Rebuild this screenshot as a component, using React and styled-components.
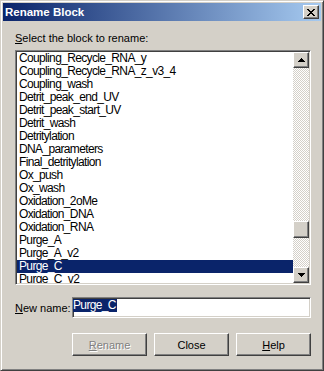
import React from "react";
import styled, { createGlobalStyle } from "styled-components";

const Global = createGlobalStyle`
  html, body { margin: 0; padding: 0; background: #d4d0c8; }
  * { box-sizing: border-box; }
`;

const FACE = "#d4d0c8";
const SEL = "#0a246a";
const UI_FONT = `"Liberation Sans", Arial, sans-serif`;

const Window = styled.div`
  width: 324px;
  height: 371px;
  background: ${FACE};
  border: 1px solid;
  border-color: ${FACE} #404040 #404040 ${FACE};
  box-shadow: inset 1px 1px #ffffff, inset -1px -1px #808080;
  padding: 2px;
  display: flex;
  flex-direction: column;
  font-family: ${UI_FONT};
  font-size: 11px;
  color: #000;
`;

const TitleBar = styled.div`
  height: 18px;
  flex: none;
  display: flex;
  align-items: center;
  justify-content: space-between;
  padding: 0 2px 0 2px;
  background: linear-gradient(to right, #0a246a, #a6caf0);
`;

const Title = styled.span`
  color: #fff;
  font-weight: bold;
  font-size: 11.5px;
  line-height: 18px;
  white-space: nowrap;
`;

const raised = `
  background: ${FACE};
  border: 1px solid;
  border-color: #ffffff #404040 #404040 #ffffff;
  box-shadow: inset -1px -1px #808080;
`;

const CloseBox = styled.div`
  ${raised}
  width: 16px;
  height: 14px;
  display: flex;
  align-items: center;
  justify-content: center;
`;

const Body = styled.div`
  flex: 1;
  display: flex;
  flex-direction: column;
  padding: 11px 10px 0 12px;
`;

const Label = styled.div`
  height: 13px;
  line-height: 13px;
  white-space: nowrap;
  margin-bottom: 5px;
`;

const sunken = `
  border: 1px solid;
  border-color: #808080 #ffffff #ffffff #808080;
  box-shadow: inset 1px 1px #404040, inset -1px -1px ${FACE};
  padding: 1px;
  background: #fff;
`;

const ListBox = styled.div`
  ${sunken}
  height: 235px;
  display: flex;
  flex: none;
`;

const Rows = styled.div`
  flex: 1;
  overflow: hidden;
  display: flex;
  flex-direction: column;
`;

const listText = `
  font-size: 12px;
  letter-spacing: -0.65px;
  line-height: 13px;
  white-space: nowrap;
`;

const Row = styled.div`
  ${listText}
  height: 13px;
  flex: none;
  padding-left: 2px;
  background: ${(p) => (p.$selected ? SEL : "transparent")};
  color: ${(p) => (p.$selected ? "#fff" : "#000")};
`;

const ScrollBar = styled.div`
  width: 16px;
  flex: none;
  display: flex;
  flex-direction: column;
`;

const ArrowBtn = styled.div`
  ${raised}
  width: 16px;
  height: 16px;
  flex: none;
  display: flex;
  align-items: center;
  justify-content: center;
`;

const Track = styled.div`
  flex: 1;
  background-color: #ffffff;
  background-image: conic-gradient(${FACE} 25%, #ffffff 0 50%, ${FACE} 0 75%, #ffffff 0);
  background-size: 2px 2px;
  padding-top: ${(p) => p.$offset}px;
`;

const Thumb = styled.div`
  ${raised}
  width: 16px;
  height: 17px;
`;

const EditRow = styled.div`
  margin-top: 12px;
  height: 21px;
  display: flex;
  align-items: center;
`;

const EditLabel = styled.label`
  width: 57px;
  flex: none;
  white-space: nowrap;
`;

const Edit = styled.div`
  ${sunken}
  ${listText}
  flex: 1;
  height: 21px;
  padding: 1px 0;
`;

const Highlight = styled.span`
  display: inline-block;
  height: 13px;
  background: ${SEL};
  color: #fff;
  padding-right: 1px;
`;

const ButtonRow = styled.div`
  margin-top: 15px;
  display: flex;
  justify-content: flex-end;
  gap: 7px;
`;

const Button = styled.div`
  ${raised}
  width: 75px;
  height: 23px;
  display: flex;
  align-items: center;
  justify-content: center;
  color: ${(p) => (p.$disabled ? "#808080" : "#000")};
  text-shadow: ${(p) => (p.$disabled ? "1px 1px #ffffff" : "none")};
  white-space: nowrap;
`;

const items = [
  "Coupling_Recycle_RNA_y",
  "Coupling_Recycle_RNA_z_v3_4",
  "Coupling_wash",
  "Detrit_peak_end_UV",
  "Detrit_peak_start_UV",
  "Detrit_wash",
  "Detritylation",
  "DNA_parameters",
  "Final_detritylation",
  "Ox_push",
  "Ox_wash",
  "Oxidation_2oMe",
  "Oxidation_DNA",
  "Oxidation_RNA",
  "Purge_A",
  "Purge_A_v2",
  "Purge_C",
  "Purge_C_v2",
];

const UpArrow = () => (
  <svg width="7" height="4" viewBox="0 0 7 4">
    <path d="M3 0h1v1h1v1h1v1h1v1H0V3h1V2h1V1h1z" fill="#000" />
  </svg>
);

const DownArrow = () => (
  <svg width="7" height="4" viewBox="0 0 7 4">
    <path d="M0 0h7v1H6v1H5v1H4v1H3V3H2V2H1V1H0z" fill="#000" />
  </svg>
);

const CloseX = () => (
  <svg width="8" height="7" viewBox="0 0 8 7">
    <path
      d="M0 0h2v1h1v1h2V1h1V0h2v1H7v1H6v1H5v1h1v1h1v1h1v1H6V6H5V5H3v1H2v1H0V6h1V5h1V4h1V3H2V2H1V1H0z"
      fill="#000"
    />
  </svg>
);

export default function App() {
  return (
    <>
      <Global />
      <Window>
        <TitleBar>
          <Title>Rename Block</Title>
          <CloseBox>
            <CloseX />
          </CloseBox>
        </TitleBar>
        <Body>
          <Label>
            <u>S</u>elect the block to rename:
          </Label>
          <ListBox>
            <Rows>
              {items.map((it) => (
                <Row key={it} $selected={it === "Purge_C"}>
                  {it}
                </Row>
              ))}
            </Rows>
            <ScrollBar>
              <ArrowBtn>
                <UpArrow />
              </ArrowBtn>
              <Track $offset={153}>
                <Thumb />
              </Track>
              <ArrowBtn>
                <DownArrow />
              </ArrowBtn>
            </ScrollBar>
          </ListBox>
          <EditRow>
            <EditLabel>
              <u>N</u>ew name:
            </EditLabel>
            <Edit>
              <Highlight>Purge_C</Highlight>
            </Edit>
          </EditRow>
          <ButtonRow>
            <Button $disabled>
              <span>
                <u>R</u>ename
              </span>
            </Button>
            <Button>Close</Button>
            <Button>
              <span>
                <u>H</u>elp
              </span>
            </Button>
          </ButtonRow>
        </Body>
      </Window>
    </>
  );
}
